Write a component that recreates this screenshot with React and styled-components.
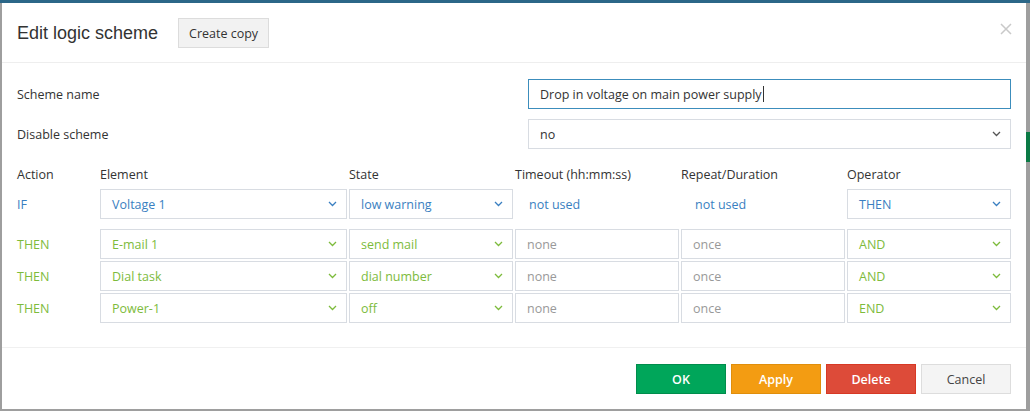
import React from 'react';
import styled, { createGlobalStyle } from 'styled-components';


const GlobalStyle = createGlobalStyle`
  html, body {
    margin: 0;
    padding: 0;
  }
  body {
    width: 1030px;
    height: 411px;
    overflow: hidden;
    font-family: "Open Sans", "Noto Sans", sans-serif;
    font-size: 12.5px;
    color: #333;
    background:
      linear-gradient(#2b6788, #2b6788) top left / 100% 3px no-repeat,
      linear-gradient(#0b7a45, #0b7a45) right 0 top 132px / 4px 30px no-repeat,
      #9e9e9e;
  }
`;


const BLUE = '#3a7fc1';
const GREEN = '#7dbb3c';


const rows = [
    { action: 'IF', element: 'Voltage 1', state: 'low warning', operator: 'THEN', tone: 'if' },
    { action: 'THEN', element: 'E-mail 1', state: 'send mail', operator: 'AND', tone: 'then' },
    { action: 'THEN', element: 'Dial task', state: 'dial number', operator: 'AND', tone: 'then' },
    { action: 'THEN', element: 'Power-1', state: 'off', operator: 'END', tone: 'then' },
];


const Chevron = ({ color }) => (
    <svg width="9" height="6" viewBox="0 0 9 6">
        <polyline points="1,1 4.5,4.5 8,1" fill="none" stroke={color} strokeWidth="1.3" />
    </svg>
);


const Select = ({ value, tone }) => {
    const color = tone === 'if' ? BLUE : tone === 'then' ? GREEN : '#555';
    return (
        <SelectBox $tone={tone}>
            <span>{value}</span>
            <Chevron color={color} />
        </SelectBox>
    );
};


const App = () => {
    return (
        <>
            <GlobalStyle />
            <Modal>
                <Header>
                    <Title>Edit logic scheme</Title>
                    <GrayButton>Create copy</GrayButton>
                    <Close>
                        <svg width="12" height="12" viewBox="0 0 12 12">
                            <path d="M1 1 L11 11 M11 1 L1 11" stroke="#c9c9c9" strokeWidth="1.5" />
                        </svg>
                    </Close>
                </Header>

                <Body>
                    <FormRow>
                        <Label>Scheme name</Label>
                        <TextInput $focused>
                            Drop in voltage on main power supply<Caret />
                        </TextInput>
                    </FormRow>
                    <FormRow>
                        <Label>Disable scheme</Label>
                        <Select value="no" />
                    </FormRow>

                    <Grid>
                        <HeadCell>Action</HeadCell>
                        <HeadCell>Element</HeadCell>
                        <HeadCell>State</HeadCell>
                        <HeadCell>Timeout (hh:mm:ss)</HeadCell>
                        <HeadCell>Repeat/Duration</HeadCell>
                        <HeadCell>Operator</HeadCell>

                        {rows.map((r, i) => (
                            <React.Fragment key={i}>
                                <ActionCell $tone={r.tone}>{r.action}</ActionCell>
                                <Select value={r.element} tone={r.tone} />
                                <Select value={r.state} tone={r.tone} />
                                {r.tone === 'if' ? (
                                    <>
                                        <Unused>not used</Unused>
                                        <Unused>not used</Unused>
                                    </>
                                ) : (
                                    <>
                                        <TextInput $placeholder>none</TextInput>
                                        <TextInput $placeholder>once</TextInput>
                                    </>
                                )}
                                <Select value={r.operator} tone={r.tone} />
                                {i === 0 && <Spacer />}
                            </React.Fragment>
                        ))}
                    </Grid>
                </Body>

                <Footer>
                    <Button $variant="ok">OK</Button>
                    <Button $variant="apply">Apply</Button>
                    <Button $variant="delete">Delete</Button>
                    <Button>Cancel</Button>
                </Footer>
            </Modal>
        </>
    );
};




// styled Components
const Modal = styled.div`
  margin: 3px 4px 0 2px;
  width: 1024px;
  height: 406px;
  background: #fff;
  display: flex;
  flex-direction: column;
  box-sizing: border-box;
`;


const Header = styled.div`
  display: flex;
  align-items: center;
  padding: 15px 15px 14px;
  border-bottom: 1px solid #eeeeee;
`;


const Title = styled.h4`
  margin: 0 20px 0 0;
  font-family: "Liberation Sans", Arial, sans-serif;
  font-size: 18px;
  line-height: 29px;
  font-weight: normal;
  color: #333;
`;


const GrayButton = styled.div`
  height: 30px;
  width: 91px;
  box-sizing: border-box;
  display: flex;
  align-items: center;
  justify-content: center;
  background: #f2f2f2;
  border: 1px solid #dcdcdc;
  color: #333;
`;


const Close = styled.div`
  margin-left: auto;
  width: 12px;
  height: 12px;
  display: flex;
  transform: translate(1px, -4px);
`;


const Body = styled.div`
  padding: 16px 15px 24px;
  flex: 1;
`;


const FormRow = styled.div`
  display: grid;
  grid-template-columns: 511px 483px;
  align-items: center;
  margin-bottom: 10px;
`;


const Label = styled.div`
  color: #333;
`;


const TextInput = styled.div`
  height: 30px;
  box-sizing: border-box;
  border: 1px solid ${p => (p.$focused ? '#3c8dbc' : '#d8dce2')};
  padding: 0 11px;
  display: flex;
  align-items: center;
  color: ${p => (p.$placeholder ? '#999' : '#333')};
  white-space: nowrap;
`;


const Caret = styled.span`
  display: inline-block;
  width: 1px;
  height: 16px;
  background: #333;
  margin-left: 1px;
`;


const SelectBox = styled.div`
  height: 30px;
  box-sizing: border-box;
  border: 1px solid #d8dce2;
  padding: 0 9px 0 11px;
  display: flex;
  align-items: center;
  justify-content: space-between;
  white-space: nowrap;
  color: ${p => (p.$tone === 'if' ? BLUE : p.$tone === 'then' ? GREEN : '#333')};
`;


const Grid = styled.div`
  margin-top: 15px;
  display: grid;
  grid-template-columns: 81px 247px 164px 164px 164px 164px;
  column-gap: 2px;
  row-gap: 2px;
  align-items: center;
`;


const HeadCell = styled.div`
  line-height: 20px;
  margin-bottom: 2px;
  padding-top: 1px;
  color: #333;
`;


const ActionCell = styled.div`
  color: ${p => (p.$tone === 'if' ? BLUE : GREEN)};
`;


const Unused = styled.div`
  padding-left: 14px;
  color: ${BLUE};
`;


const Spacer = styled.div`
  grid-column: 1 / -1;
  height: 6px;
`;


const Footer = styled.div`
  border-top: 1px solid #f0f0f0;
  padding: 16px 15px 15px;
  display: flex;
  justify-content: flex-end;
  gap: 5px;
`;


const variants = {
    ok: { bg: '#00a65a', border: '#008d4c', color: '#fff' },
    apply: { bg: '#f39c12', border: '#e08e0b', color: '#fff' },
    delete: { bg: '#dd4b39', border: '#d73925', color: '#fff' },
    default: { bg: '#f4f4f4', border: '#ddd', color: '#444' },
};


const Button = styled.div`
  width: 90px;
  height: 30px;
  box-sizing: border-box;
  display: flex;
  align-items: center;
  justify-content: center;
  background: ${p => variants[p.$variant || 'default'].bg};
  border: 1px solid ${p => variants[p.$variant || 'default'].border};
  color: ${p => variants[p.$variant || 'default'].color};
  font-weight: ${p => (p.$variant ? 600 : 'normal')};
`;





export default App
